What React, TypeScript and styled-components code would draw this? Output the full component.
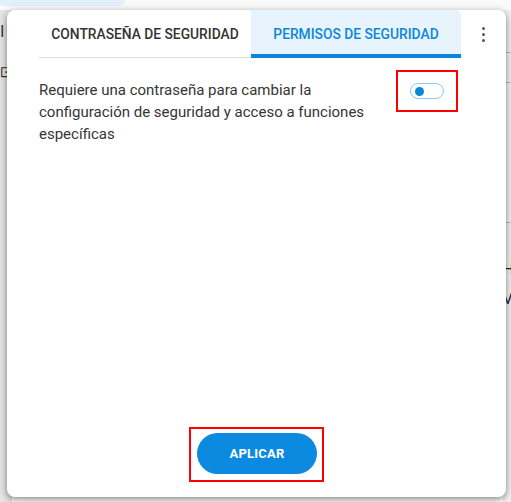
import styled, { createGlobalStyle } from "styled-components";

const GlobalStyle = createGlobalStyle`
  html, body {
    margin: 0;
    padding: 0;
    background: #f7f7f7;
    font-family: Roboto, "Liberation Sans", sans-serif;
  }
`;

const Page = styled.div`
  position: relative;
  width: 511px;
  height: 502px;
  overflow: hidden;
  display: flex;
  flex-direction: column;
  background: #f7f7f7;
`;

const TopStrip = styled.div`
  height: 10px;
  background: #fafafa;
  flex-shrink: 0;
`;

const Pill = styled.div`
  width: 125px;
  height: 6px;
  background: #e3f0fc;
  border-bottom-right-radius: 12px;
`;

const BackRow = styled.div`
  flex: 1;
  display: flex;
`;

const Rail = styled.div`
  width: 12px;
  display: flex;
  flex-direction: column;
  align-items: flex-start;
  gap: 22px;
  padding-top: 13px;
  background: #e4e4e4;
  font-family: "DejaVu Sans", sans-serif;
  font-size: 15px;
  color: #333;
`;

const BackMain = styled.div`
  flex: 1;
  background: #fff;
`;

const RightCol = styled.div`
  width: 8px;
  display: flex;
  flex-direction: column;
  background: #f0f0f0;
  font-size: 15px;
  color: #222;
  overflow: hidden;
`;

const RightLine = styled.div<{ $gap: number }>`
  margin-top: ${(p) => p.$gap}px;
  height: 1px;
  background: #bdbdbd;
`;

const RightText = styled.div<{ $gap: number }>`
  margin-top: ${(p) => p.$gap}px;
  line-height: 16px;
  white-space: nowrap;
`;

const Card = styled.div`
  position: absolute;
  left: 7px;
  top: 10px;
  width: 499px;
  height: 487px;
  background: #fff;
  border-radius: 8px;
  box-shadow: 0 3px 6px rgba(0, 0, 0, 0.35), 0 0 8px rgba(0, 0, 0, 0.15);
  display: flex;
  flex-direction: column;
`;

const Header = styled.div`
  display: flex;
  padding-left: 32px;
`;

const Tab = styled.div<{ $active?: boolean }>`
  height: 48px;
  box-sizing: border-box;
  display: flex;
  align-items: center;
  justify-content: center;
  font-size: 13.8px;
  font-weight: 500;
  white-space: nowrap;
  color: ${(p) => (p.$active ? "#0b87d9" : "#333")};
  background: ${(p) => (p.$active ? "#e7f3fd" : "transparent")};
  border-bottom: ${(p) => (p.$active ? "4px solid #0b87d9" : "1px solid #dcdcdc")};
  border-top-right-radius: ${(p) => (p.$active ? "6px" : "0")};
  padding-top: ${(p) => (p.$active ? "3px" : "0")};
`;

const MenuButton = styled.div`
  flex: 1;
  display: flex;
  flex-direction: column;
  align-items: center;
  gap: 3px;
  padding-top: 17px;
`;

const Dot = styled.span`
  width: 3px;
  height: 3px;
  border-radius: 50%;
  background: #555;
`;

const SettingRow = styled.div`
  display: flex;
  align-items: flex-start;
  justify-content: space-between;
  padding: 12px 48px 0 32px;
`;

const Description = styled.p`
  margin: 9px 0 0;
  width: 340px;
  font-size: 15px;
  line-height: 22px;
  color: #353535;
`;

const Highlight = styled.div`
  border: 2px solid #ff0000;
  display: flex;
  align-items: center;
  justify-content: center;
  box-sizing: border-box;
`;

const ToggleBox = styled(Highlight)`
  width: 62px;
  height: 42px;
`;

const Toggle = styled.div`
  width: 34px;
  height: 16px;
  box-sizing: border-box;
  border: 1px solid #8cc8f2;
  border-radius: 8px;
  background: #fff;
  display: flex;
  align-items: center;
  padding-left: 4px;
`;

const Knob = styled.span`
  width: 9px;
  height: 9px;
  border-radius: 50%;
  background: #0b87d9;
`;

const Footer = styled.div`
  margin-top: auto;
  display: flex;
  justify-content: center;
  padding-bottom: 15px;
`;

const ButtonBox = styled(Highlight)`
  padding: 4px 5px 6px 6px;
`;

const ApplyButton = styled.button`
  width: 120px;
  height: 41px;
  border: none;
  border-radius: 21px;
  background: #0b8ae0;
  color: #fff;
  font-family: Roboto, "Liberation Sans", sans-serif;
  font-size: 13px;
  font-weight: 700;
  letter-spacing: 0.2px;
  cursor: pointer;
`;

export default function App() {
  return (
    <>
      <GlobalStyle />
      <Page>
        <TopStrip>
          <Pill />
        </TopStrip>
        <BackRow>
          <Rail>
            <span>I</span>
            <span>⊡</span>
          </Rail>
          <BackMain />
          <RightCol>
            <RightLine $gap={42} />
            <RightLine $gap={29} />
            <RightLine $gap={139} />
            <RightText $gap={38}>H</RightText>
            <RightText $gap={14}>V</RightText>
          </RightCol>
        </BackRow>
        <Card>
          <Header>
            <Tab style={{ width: 212 }}>CONTRASEÑA DE SEGURIDAD</Tab>
            <Tab $active style={{ width: 210 }}>
              PERMISOS DE SEGURIDAD
            </Tab>
            <MenuButton>
              <Dot />
              <Dot />
              <Dot />
            </MenuButton>
          </Header>
          <SettingRow>
            <Description>
              Requiere una contraseña para cambiar la configuración de
              seguridad y acceso a funciones específicas
            </Description>
            <ToggleBox>
              <Toggle>
                <Knob />
              </Toggle>
            </ToggleBox>
          </SettingRow>
          <Footer>
            <ButtonBox>
              <ApplyButton>APLICAR</ApplyButton>
            </ButtonBox>
          </Footer>
        </Card>
      </Page>
    </>
  );
}
